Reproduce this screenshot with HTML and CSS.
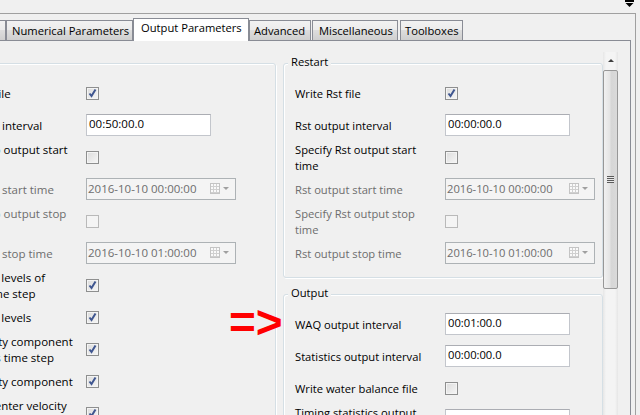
FILE: index.html
```html
<!DOCTYPE html>
<html>
<head>
<meta charset="utf-8">
<title>Output Parameters</title>
<link rel="stylesheet" href="styles.css">
</head>
<body>
<div class="topbar">
  <svg class="menu-icon" width="9" height="7" viewBox="0 0 9 7"><rect x="0" y="0" width="9" height="2" fill="#000"/><path d="M0.5 3 L8.5 3 L4.5 7 Z" fill="#000"/></svg>
</div>
<div class="frame">
  <div class="tabs">
    <div class="tab tab-cut"></div>
    <div class="tab tab-num">Numerical Parameters</div>
    <div class="tab tab-active">Output Parameters</div>
    <div class="tab tab-adv">Advanced</div>
    <div class="tab tab-misc">Miscellaneous</div>
    <div class="tab tab-tool">Toolboxes</div>
  </div>
  <div class="panel">
    <div class="viewport">
      <div class="content">
        <div class="group group-left">
          <div class="group-title">Map</div>
          <div class="row"><span class="lbl">Write Map file</span><span class="cb checked"><svg viewBox="0 0 11 11" width="11" height="11"><path d="M2.5 5.5 L4.5 8 L8.5 1.5" fill="none" stroke="#3f5690" stroke-width="2"/></svg></span></div>
          <div class="row"><span class="lbl">Map output interval</span><span class="tb">00:50:00.0</span></div>
          <div class="row"><span class="lbl">Specify Map output start<br>time</span><span class="cb"></span></div>
          <div class="row"><span class="lbl off">Map output start time</span><span class="dt"><span class="dt-text">2016-10-10 00:00:00</span><span class="cal"></span><span class="dd"></span></span></div>
          <div class="row"><span class="lbl off">Specify Map output stop<br>time</span><span class="cb disabled"></span></div>
          <div class="row"><span class="lbl off">Map output stop time</span><span class="dt"><span class="dt-text">2016-10-10 01:00:00</span><span class="cal"></span><span class="dd"></span></span></div>
          <div class="row"><span class="lbl">Write water levels of<br>previous time step</span><span class="cb checked"><svg viewBox="0 0 11 11" width="11" height="11"><path d="M2.5 5.5 L4.5 8 L8.5 1.5" fill="none" stroke="#3f5690" stroke-width="2"/></svg></span></div>
          <div class="row"><span class="lbl">Write water levels</span><span class="cb checked"><svg viewBox="0 0 11 11" width="11" height="11"><path d="M2.5 5.5 L4.5 8 L8.5 1.5" fill="none" stroke="#3f5690" stroke-width="2"/></svg></span></div>
          <div class="row"><span class="lbl">Write velocity component<br>for previous time step</span><span class="cb checked"><svg viewBox="0 0 11 11" width="11" height="11"><path d="M2.5 5.5 L4.5 8 L8.5 1.5" fill="none" stroke="#3f5690" stroke-width="2"/></svg></span></div>
          <div class="row"><span class="lbl">Write velocity component</span><span class="cb checked"><svg viewBox="0 0 11 11" width="11" height="11"><path d="M2.5 5.5 L4.5 8 L8.5 1.5" fill="none" stroke="#3f5690" stroke-width="2"/></svg></span></div>
          <div class="row"><span class="lbl">Write cell-center velocity<br>vectors</span><span class="cb checked"><svg viewBox="0 0 11 11" width="11" height="11"><path d="M2.5 5.5 L4.5 8 L8.5 1.5" fill="none" stroke="#3f5690" stroke-width="2"/></svg></span></div>
          <div class="row"><span class="lbl">Write discharges</span><span class="cb checked"><svg viewBox="0 0 11 11" width="11" height="11"><path d="M2.5 5.5 L4.5 8 L8.5 1.5" fill="none" stroke="#3f5690" stroke-width="2"/></svg></span></div>
        </div>
        <div class="right-col">
          <div class="group group-restart">
            <div class="group-title">Restart</div>
            <div class="row"><span class="lbl">Write Rst file</span><span class="cb checked"><svg viewBox="0 0 11 11" width="11" height="11"><path d="M2.5 5.5 L4.5 8 L8.5 1.5" fill="none" stroke="#3f5690" stroke-width="2"/></svg></span></div>
            <div class="row"><span class="lbl">Rst output interval</span><span class="tb">00:00:00.0</span></div>
            <div class="row"><span class="lbl">Specify Rst output start<br>time</span><span class="cb"></span></div>
            <div class="row"><span class="lbl off">Rst output start time</span><span class="dt"><span class="dt-text">2016-10-10 00:00:00</span><span class="cal"></span><span class="dd"></span></span></div>
            <div class="row"><span class="lbl off">Specify Rst output stop<br>time</span><span class="cb disabled"></span></div>
            <div class="row"><span class="lbl off">Rst output stop time</span><span class="dt"><span class="dt-text">2016-10-10 01:00:00</span><span class="cal"></span><span class="dd"></span></span></div>
          </div>
          <div class="group group-output">
            <div class="group-title">Output</div>
            <div class="row"><span class="lbl">WAQ output interval</span><span class="tb">00:01:00.0</span></div>
            <div class="row"><span class="lbl">Statistics output interval</span><span class="tb">00:00:00.0</span></div>
            <div class="row"><span class="lbl">Write water balance file</span><span class="cb"></span></div>
            <div class="row"><span class="lbl">Timing statistics output<br>interval</span><span class="tb">00:00:00.0</span></div>
          </div>
        </div>
      </div>
    </div>
    <div class="vscroll">
      <div class="sb-up"><span class="sb-arrow"></span></div>
      <div class="sb-thumb"><span class="grip"></span></div>
    </div>
  </div>
</div>
<div class="annot">=&gt;</div>
</body>
</html>
```
FILE: styles.css
```css
* { box-sizing: border-box; }
html, body { margin: 0; padding: 0; }
body {
  width: 640px;
  height: 415px;
  overflow: hidden;
  position: relative;
  background: #f0f0f0;
  font-family: "Open Sans", "Noto Sans", sans-serif;
  font-size: 11.2px;
  color: #000;
}
.topbar {
  height: 13px;
  display: flex;
  justify-content: flex-end;
  padding-right: 6px;
}
.menu-icon { display: block; }

.frame {
  width: 636px;
  height: 402px;
  border-top: 1px solid #a0a0a0;
  border-right: 1px solid #a0a0a0;
  padding-right: 4px;
}

.tabs {
  display: flex;
  align-items: flex-end;
  height: 26px;
  padding-top: 4px;
}
.tab {
  flex: none;
  height: 20px;
  border: 1px solid #898c95;
  border-bottom: none;
  background: linear-gradient(#f2f2f2, #ebebeb 50%, #dddddd 50%, #cfcfcf);
  padding: 2px 0 0 5px;
  line-height: 16px;
  white-space: nowrap;
}
.tab-cut { width: 50px; margin-left: -44px; }
.tab-num { width: 127px; }
.tab-active {
  width: 116px;
  height: 23px;
  margin-bottom: -1px;
  background: #fff;
  padding: 1px 0 0 7px;
  position: relative;
  z-index: 1;
}
.tab-adv { width: 62px; padding-left: 4px; }
.tab-misc { width: 86px; margin-left: 1px; padding-left: 6px; }
.tab-tool { width: 63px; margin-left: 2px; padding-left: 4px; }

.panel {
  width: 631px;
  height: 376px;
  border-top: 1px solid #898c95;
  border-right: 1px solid #898c95;
  padding: 11px 12px 0 0;
  display: flex;
}
.viewport {
  width: 603px;
  flex: none;
  overflow: hidden;
}
.content {
  display: flex;
  gap: 7px;
  margin-left: -76px;
  padding-top: 11px;
  align-items: flex-start;
}
.group {
  border: 1px solid #d5dfe5;
  border-radius: 3px;
  box-shadow: inset 1px 1px 0 #fff, 1px 1px 0 #fff;
  padding: 0 0 7px 11px;
}
.group-left { width: 352px; flex: none; font-size: 11.5px; }
.right-col { width: 320px; flex: none; }
.group-output { margin-top: 16px; }
.group-title {
  width: fit-content;
  margin: -10px 0 8px -7px;
  padding: 0 3px;
  background: #f0f0f0;
  line-height: 16px;
}
.row {
  height: 32px;
  display: grid;
  grid-template-columns: 150px auto;
  align-items: center;
  justify-items: start;
}
.lbl { line-height: 16px; white-space: nowrap; }
.lbl.off { color: #6d6d6d; }

.cb {
  width: 13px;
  height: 13px;
  border: 1px solid #8e8f8f;
  background: linear-gradient(135deg, #dcdcdc, #f6f6f6);
  box-shadow: inset 0 0 0 1px #f4f4f4;
  display: block;
  margin-top: -1px;
}
.cb svg { display: block; }
.cb.disabled {
  border-color: #b9b9b9;
  background: #f4f4f4;
  box-shadow: none;
}
.tb {
  width: 125px;
  height: 22px;
  border: 1px solid #c3c6cc;
  border-top-color: #abadb3;
  background: #fff;
  padding-left: 2px;
  line-height: 18px;
  margin-top: -3px;
}
.dt {
  width: 150px;
  height: 22px;
  border: 1px solid #adb2b5;
  background: #f4f4f4;
  color: #6d6d6d;
  display: flex;
  align-items: center;
  padding-left: 1px;
  margin-top: -3px;
}
.dt-text { width: 122px; flex: none; }
.cal {
  width: 10px;
  height: 11px;
  flex: none;
  border: 1px solid #c4c4c4;
  background:
    repeating-linear-gradient(to right, transparent 0 2px, #d0d0d0 2px 3px),
    repeating-linear-gradient(to bottom, transparent 0 2px, #d0d0d0 2px 3px),
    #fafafa;
}
.dd {
  margin-left: 3px;
  width: 0;
  height: 0;
  border-left: 3px solid transparent;
  border-right: 3px solid transparent;
  border-top: 3px solid #a0a0a0;
}

.vscroll {
  width: 15px;
  flex: none;
  background: linear-gradient(to right, #e6e6e6, #f4f4f4 20%, #f4f4f4 80%, #e6e6e6);
  display: flex;
  flex-direction: column;
}
.sb-up {
  height: 17px;
  display: flex;
  align-items: center;
  justify-content: center;
}
.sb-arrow {
  width: 0;
  height: 0;
  border-left: 3px solid transparent;
  border-right: 3px solid transparent;
  border-bottom: 3px solid #404040;
}
.sb-thumb {
  height: 219px;
  margin-top: 1px;
  border: 1px solid #979797;
  border-radius: 2px;
  background: linear-gradient(to right, #f1f1f1, #e4e4e4 45%, #d6d6d6 55%, #dadada);
  display: flex;
  align-items: center;
  justify-content: center;
}
.grip {
  width: 7px;
  height: 7px;
  background: repeating-linear-gradient(to bottom, #5a5a5a 0 1px, #e8e8e8 1px 2px);
}

.annot {
  position: absolute;
  left: 229px;
  top: 299px;
  font-family: "Liberation Sans", Arial, sans-serif;
  font-weight: bold;
  font-size: 46px;
  line-height: 46px;
  color: #ff0000;
}
```
